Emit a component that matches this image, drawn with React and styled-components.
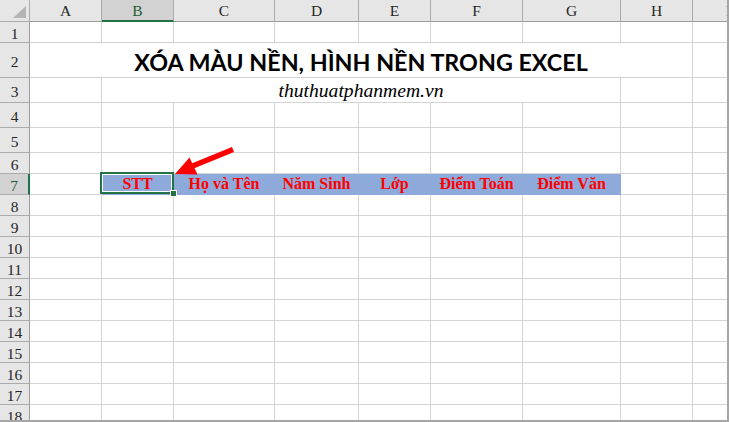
import React from 'react'
import styled, { createGlobalStyle } from 'styled-components'

const GlobalStyle = createGlobalStyle`
    body {
        margin: 0;
        background: #ffffff;
    }
`;

const COLS = ['A', 'B', 'C', 'D', 'E', 'F', 'G', 'H', 'I'];
const ROW_HEIGHTS = [21, 35, 25, 25, 25, 21, 21, 21, 21, 21, 21, 21, 21, 21, 21, 21, 21, 21];
const HEADINGS = ['STT', 'Họ và Tên', 'Năm Sinh', 'Lớp', 'Điểm Toán', 'Điểm Văn'];

const App = () => {
    const rows = ROW_HEIGHTS.map((h, i) => i + 1);

    const renderRow = (r) => {
        const cells = [
            <RowHeader key={'h' + r} $selected={r === 7}>{r}</RowHeader>
        ];

        if (r === 2) {
            cells.push(<Title key="title">XÓA MÀU NỀN, HÌNH NỀN TRONG EXCEL</Title>);
            cells.push(<Cell key="i2" />);
            return cells;
        }

        if (r === 3) {
            cells.push(<Cell key="a3" />);
            cells.push(<Subtitle key="sub">thuthuatphanmem.vn</Subtitle>);
            cells.push(<Cell key="h3" />);
            cells.push(<Cell key="i3" />);
            return cells;
        }

        if (r === 7) {
            cells.push(<Cell key="a7" />);
            HEADINGS.forEach((text, i) => {
                cells.push(
                    <Cell key={'t' + i} $fill>
                        {text}
                        {i === 0 && (
                            <Selection>
                                <Handle />
                            </Selection>
                        )}
                    </Cell>
                );
            });
            cells.push(<Cell key="h7" />);
            cells.push(<Cell key="i7" />);
            return cells;
        }

        COLS.forEach((c) => cells.push(<Cell key={c + r} />));
        return cells;
    };

    return (
        <>
            <GlobalStyle />
            <Frame>
                <Sheet>
                    <Corner />
                    {COLS.map((c) => (
                        <ColHeader key={c} $selected={c === 'B'}>{c}</ColHeader>
                    ))}
                    {rows.map(renderRow)}
                </Sheet>
                {/* red pointer drawn over the sheet */}
                <Arrow viewBox="0 0 729 422" width="729" height="422">
                    <line x1="233" y1="149.5" x2="189" y2="167.5" stroke="#ff0000" strokeWidth="5.5" />
                    <polygon points="175,174 189.5,157.5 197.5,174.5" fill="#ff0000" />
                </Arrow>
            </Frame>
        </>
    )
}

export default App;

const Frame = styled.div`
    position: relative;
    width: 729px;
    height: 422px;
    box-sizing: border-box;
    border-right: 2px solid #a6a6a6;
    border-bottom: 2px solid #a6a6a6;
    overflow: hidden;
`;

const Sheet = styled.div`
    display: grid;
    grid-template-columns: 30px 72px 72px 101px 84px 72px 92px 98px 72px 72px;
    grid-template-rows: 22px ${ROW_HEIGHTS.map((h) => h + 'px').join(' ')};
    font-family: "Liberation Serif", "Times New Roman", serif;
`;

const Corner = styled.div`
    position: relative;
    background: #e6e6e6;
    border-right: 1px solid #ababab;
    border-bottom: 1px solid #ababab;

    &::after {
        content: '';
        position: absolute;
        right: 3px;
        bottom: 3px;
        width: 0;
        height: 0;
        border-left: 13px solid transparent;
        border-bottom: 12px solid #b4b4b4;
    }
`;

const ColHeader = styled.div`
    display: flex;
    justify-content: center;
    align-items: center;
    padding-top: 1px;
    box-sizing: border-box;
    background: ${(p) => (p.$selected ? '#d2d2d2' : '#e6e6e6')};
    color: ${(p) => (p.$selected ? '#1e5c3a' : '#262626')};
    border-right: 1px solid #ababab;
    border-bottom: ${(p) => (p.$selected ? '2px solid #217346' : '1px solid #9b9b9b')};
    font-size: 15.5px;
    line-height: 18px;
`;

const RowHeader = styled.div`
    display: flex;
    justify-content: center;
    align-items: center;
    padding-top: 3px;
    box-sizing: border-box;
    background: ${(p) => (p.$selected ? '#d2d2d2' : '#e6e6e6')};
    color: ${(p) => (p.$selected ? '#1e5c3a' : '#262626')};
    border-right: ${(p) => (p.$selected ? '2px solid #217346' : '1px solid #9b9b9b')};
    border-bottom: 1px solid #ababab;
    font-size: 15.5px;
    line-height: 18px;
`;

const Cell = styled.div`
    position: relative;
    display: flex;
    justify-content: center;
    align-items: flex-end;
    box-sizing: border-box;
    background: ${(p) => (p.$fill ? '#8eaadb' : '#ffffff')};
    border-right: 1px solid ${(p) => (p.$fill ? '#8eaadb' : '#d4d4d4')};
    border-bottom: 1px solid ${(p) => (p.$fill ? '#8eaadb' : '#d4d4d4')};
    color: #ff0000;
    font-weight: bold;
    font-size: 16px;
    line-height: 18px;
    padding-bottom: 1px;
    white-space: nowrap;
`;

const Title = styled.div`
    grid-column: 2 / span 8;
    display: flex;
    justify-content: center;
    align-items: center;
    padding-top: 4px;
    box-sizing: border-box;
    border-right: 1px solid #d4d4d4;
    border-bottom: 1px solid #d4d4d4;
    font-family: Lato, "Open Sans", sans-serif;
    font-weight: 700;
    font-size: 23.3px;
    color: #000000;
    white-space: nowrap;
`;

const Subtitle = styled.div`
    grid-column: 3 / span 6;
    display: flex;
    justify-content: center;
    align-items: flex-end;
    box-sizing: border-box;
    border-right: 1px solid #d4d4d4;
    border-bottom: 1px solid #d4d4d4;
    font-style: italic;
    font-size: 19.6px;
    line-height: 22px;
    color: #000000;
    white-space: nowrap;
`;

const Selection = styled.div`
    position: absolute;
    left: -2px;
    top: -2px;
    right: -1px;
    bottom: 0;
    border: 2px solid #217346;
    box-shadow: inset 0 0 0 1px #ffffff;
    z-index: 2;
`;

const Handle = styled.div`
    position: absolute;
    right: -5px;
    bottom: -5px;
    width: 7px;
    height: 7px;
    box-sizing: border-box;
    background: #217346;
    border: 1px solid #ffffff;
`;

const Arrow = styled.svg`
    position: absolute;
    left: 0;
    top: 0;
    pointer-events: none;
    z-index: 3;
`;
